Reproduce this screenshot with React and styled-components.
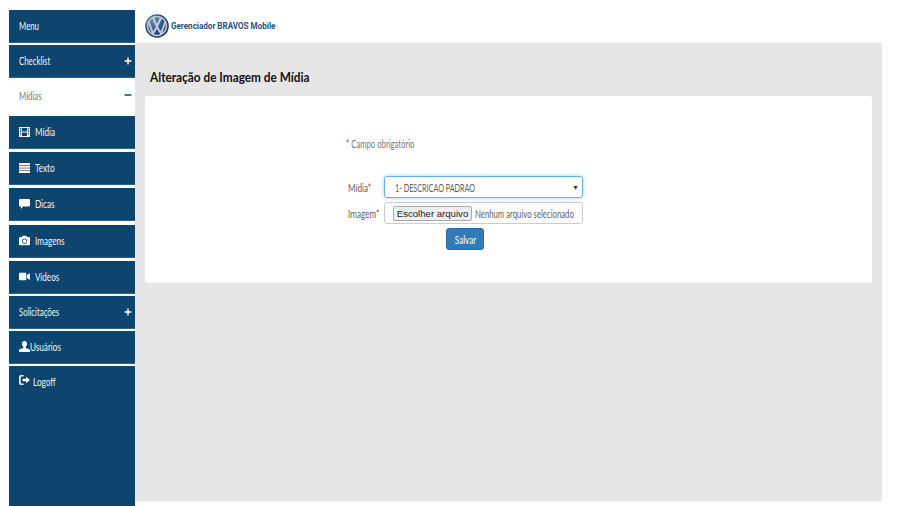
import React from 'react';
import styled, { createGlobalStyle } from 'styled-components';
import { FaCamera, FaVideo, FaPlus, FaMinus } from 'react-icons/fa';

const Global = createGlobalStyle`
  html, body { margin: 0; padding: 0; background: #fff; overflow: hidden; }
  body { font-family: "Lato", "Roboto", sans-serif; }
  * { box-sizing: border-box; }
`;

const Narrow = styled.span`
  display: inline-block;
  white-space: nowrap;
  transform: scaleX(${p => p.$s || 0.71});
  transform-origin: ${p => p.$o || 'left'} center;
`;
const Page = styled.div`
  display: flex;
  width: 900px;
  height: 506px;
  padding: 10px 18px 0 9px;
`;
const Sidebar = styled.nav`
  width: 126px;
  height: 496px;
  display: flex;
  flex-direction: column;
  flex: none;
`;
const Item = styled.div`
  display: flex;
  align-items: center;
  flex: none;
  height: ${p => p.$h || 33}px;
  margin-bottom: ${p => p.$gap ?? 2}px;
  padding: 0 3px ${p => (p.$active ? 3 : 1)}px 10px;
  background: ${p => (p.$active ? '#fff' : '#0d456f')};
  color: ${p => (p.$active ? '#6b7c8c' : '#f2f5f8')};
  border-bottom: 1px solid ${p => (p.$active ? '#fff' : '#2f6086')};
  font-size: 11px;
`;
const Tail = styled(Item)`
  flex: 1;
  height: auto;
  margin: 0;
  align-items: flex-start;
  padding-top: 9px;
  border-bottom: 0;
`;
const IconSlot = styled.span`
  display: inline-flex;
  align-items: center;
  width: ${p => p.$w || 16}px;
  flex: none;
  font-size: 11px;
  color: #fff;
`;
const Label = styled.span`
  flex: 1;
`;
const Toggle = styled.span`
  display: inline-flex;
  font-size: 8px;
  color: ${p => (p.$active ? '#0d456f' : '#fff')};
`;
const Main = styled.main`
  flex: 1;
  display: flex;
  flex-direction: column;
  height: 491px;
`;
const Header = styled.header`
  height: 33px;
  flex: none;
  display: flex;
  align-items: center;
  gap: 2px;
  padding: 0 0 2px 10px;
  background: #fff;
`;
const Brand = styled.span`
  font-family: "Roboto", sans-serif;
  font-weight: 700;
  font-size: 9.5px;
  color: #27527a;
  display: inline-block;
  white-space: nowrap;
  transform: scaleX(0.85);
  transform-origin: left center;
  margin-bottom: 1px;
`;
const Content = styled.section`
  flex: 1;
  background: #e6e6e6;
  padding: 26px 10px 0;
`;
const Title = styled.h1`
  margin: 0 0 10px 5px;
  height: 17px;
  font-family: "Lato", sans-serif;
  font-weight: 700;
  font-size: 12.5px;
  line-height: 17px;
  color: #111;
  white-space: nowrap;
`;
const Card = styled.div`
  height: 187px;
  background: #fff;
  border-radius: 3px;
  padding: 41px 0 0 201px;
`;
const Required = styled.p`
  margin: 0 0 25px;
  font-size: 11px;
  line-height: 14px;
  color: #777;
`;
const Star = styled.span`
  color: #e02b2b;
`;
const FormRow = styled.div`
  display: flex;
  align-items: center;
  height: 22px;
  margin: 0 0 4px 2px;
  font-size: 11px;
  color: #5f5f5f;
`;
const FieldLabel = styled.label`
  width: 36px;
  flex: none;
`;
const Select = styled.div`
  width: 199px;
  height: 22px;
  display: flex;
  align-items: center;
  justify-content: space-between;
  padding: 0 3px 0 10px;
  border: 1px solid #66afe9;
  border-radius: 3px;
  box-shadow: 0 0 4px rgba(102, 175, 233, 0.6);
`;
const Caret = styled.span`
  font-size: 7px;
  color: #333;
`;
const FileBox = styled.div`
  width: 199px;
  height: 22px;
  display: flex;
  align-items: center;
  gap: 3px;
  padding: 0 0 0 8px;
  border: 1px solid #ccc;
  border-radius: 3px;
  white-space: nowrap;
`;
const FileButton = styled.span`
  display: inline-flex;
  align-items: center;
  justify-content: center;
  width: 79px;
  height: 15px;
  flex: none;
  background: #efefef;
  border: 1px solid #a9a9a9;
  border-radius: 2px;
  font-family: "Liberation Sans", sans-serif;
  font-size: 9.6px;
  color: #222;
`;
const Submit = styled.button`
  display: block;
  width: 38px;
  height: 22px;
  margin: 0 0 0 100px;
  padding: 0;
  background: #337ab7;
  border: 1px solid #2e6da4;
  border-radius: 3px;
  font: inherit;
  font-size: 11px;
  color: #fff;
`;

const Logo = () => (
  <svg width="24" height="24" viewBox="0 0 48 48" aria-hidden="true">
    <defs>
      <radialGradient id="vwg" cx="35%" cy="30%" r="80%">
        <stop offset="0" stopColor="#6c8bb6" />
        <stop offset="0.55" stopColor="#2d4f80" />
        <stop offset="1" stopColor="#182b4c" />
      </radialGradient>
    </defs>
    <circle cx="24" cy="24" r="23.5" fill="url(#vwg)" />
    <circle cx="24" cy="24" r="19" fill="none" stroke="#c3cddb" strokeWidth="3" />
    <path d="M16 7 L24 25 L32 7 M7 15 L16 39 L24 26 L32 39 L41 15" fill="none" stroke="#c3cddb" strokeWidth="4" strokeLinejoin="round" />
  </svg>
);

const Film = () => (
  <svg width="11" height="10" viewBox="0 0 11 10" fill="#fff" aria-hidden="true">
    <path fillRule="evenodd" d="M0 0h11v10H0z M3 1v3.4h5V1z M3 5.6V9h5V5.6z M.8 1v1.4h1.4V1z M.8 3.6V5h1.4V3.6z M.8 6.2v1.4h1.4V6.2z M8.8 1v1.4h1.4V1z M8.8 3.6V5h1.4V3.6z M8.8 6.2v1.4h1.4V6.2z" />
  </svg>
);
const Bars = () => (
  <svg width="11" height="10" viewBox="0 0 11 10" fill="#fff" aria-hidden="true">
    <rect y="0" width="11" height="2" /><rect y="2.7" width="11" height="2" />
    <rect y="5.4" width="11" height="2" /><rect y="8" width="11" height="2" />
  </svg>
);
const Bubble = () => (
  <svg width="11" height="10" viewBox="0 0 11 10" fill="#fff" aria-hidden="true">
    <path d="M1 0h9a1 1 0 0 1 1 1v5.5a1 1 0 0 1-1 1H4L1.8 10V7.5H1a1 1 0 0 1-1-1V1a1 1 0 0 1 1-1z" />
  </svg>
);
const Person = () => (
  <svg width="11" height="11" viewBox="0 0 11 11" fill="#fff" aria-hidden="true">
    <path d="M5.5 0C7 0 8 1.1 8 2.7 8 4 7.4 5.2 6.7 5.8v1.1L11 8.6V11H0V8.6l4.3-1.7V5.8C3.6 5.2 3 4 3 2.7 3 1.1 4 0 5.5 0z" />
  </svg>
);
const LogOut = () => (
  <svg width="11" height="10" viewBox="0 0 11 10" fill="#fff" aria-hidden="true">
    <path d="M4.5 0v1.6H2.2a.6.6 0 0 0-.6.6v5.6c0 .3.3.6.6.6h2.3V10H2A2 2 0 0 1 0 8V2a2 2 0 0 1 2-2z" />
    <path d="M7 1.8 11 5 7 8.2V6.2H3.5V3.8H7z" />
  </svg>
);

const nav = [
  { icon: <Film />, label: 'Mídia', gap: 3 },
  { icon: <Bars />, label: 'Texto', gap: 3 },
  { icon: <Bubble />, label: 'Dicas', gap: 4 },
  { icon: <FaCamera />, label: 'Imagens', gap: 3 },
  { icon: <FaVideo />, label: 'Vídeos', gap: 2 },
];

export default function App() {
  return (
    <Page>
      <Global />
      <Sidebar>
        <Item><Narrow>Menu</Narrow></Item>
        <Item $gap={0}><Label><Narrow>Checklist</Narrow></Label><Toggle><FaPlus /></Toggle></Item>
        <Item $active $h={38} $gap={0}><Label><Narrow>Mídias</Narrow></Label><Toggle $active><FaMinus /></Toggle></Item>
        {nav.map(n => (
          <Item key={n.label} $gap={n.gap}>
            <IconSlot>{n.icon}</IconSlot>
            <Label><Narrow $s={0.74}>{n.label}</Narrow></Label>
          </Item>
        ))}
        <Item><Label><Narrow>Solicitações</Narrow></Label><Toggle><FaPlus /></Toggle></Item>
        <Item><IconSlot $w={11}><Person /></IconSlot><Label><Narrow $s={0.74}>Usuários</Narrow></Label></Item>
        <Tail><IconSlot $w={14}><LogOut /></IconSlot><Label><Narrow $s={0.74}>Logoff</Narrow></Label></Tail>
      </Sidebar>
      <Main>
        <Header><Logo /><Brand>Gerenciador BRAVOS Mobile</Brand></Header>
        <Content>
          <Title><Narrow $s={0.945}>Alteração de Imagem de Mídia</Narrow></Title>
          <Card>
            <Required><Narrow $s={0.7}><Star>*</Star> Campo obrigatório</Narrow></Required>
            <FormRow>
              <FieldLabel><Narrow $s={0.74}>Mídia<Star>*</Star></Narrow></FieldLabel>
              <Select><Narrow $s={0.655}>1- DESCRICAO PADRAO</Narrow><Caret>▼</Caret></Select>
            </FormRow>
            <FormRow>
              <FieldLabel><Narrow $s={0.74}>Imagem<Star>*</Star></Narrow></FieldLabel>
              <FileBox><FileButton>Escolher arquivo</FileButton><Narrow $s={0.705}>Nenhum arquivo selecionado</Narrow></FileBox>
            </FormRow>
            <Submit><Narrow $o="center" $s={0.74}>Salvar</Narrow></Submit>
          </Card>
        </Content>
      </Main>
    </Page>
  );
}
